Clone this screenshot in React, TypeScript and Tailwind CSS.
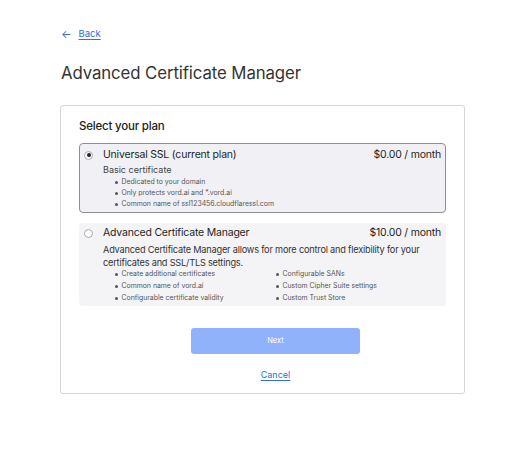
import React from "react";

const Bullet = ({ children, h }: { children: React.ReactNode; h: string }) => (
  <li className={`flex items-center gap-[4px] ${h}`}>
    <span className="w-[2.5px] h-[2.5px] rounded-full bg-[#555] shrink-0" />
    <span className="whitespace-nowrap">{children}</span>
  </li>
);

export default function App() {
  return (
    <div className="w-[520px] h-[456px] bg-white text-[#313131]" style={{ fontFamily: "Inter, 'Noto Sans', sans-serif" }}>
      <div className="pl-[61px] pt-[27px]">
        <div className="flex items-center gap-[7px] text-[#2f6fd6] text-[9.5px] h-[14px]">
          <span className="text-[11px] leading-none">←</span>
          <a className="underline underline-offset-2">Back</a>
        </div>
        <h1 className="mt-[21px] text-[16.8px] leading-[22px] tracking-[-0.1px] text-[#333]">Advanced Certificate Manager</h1>
      </div>
      <div className="ml-[60px] mt-[21px] w-[405px] h-[289px] border border-[#d6d6d6] rounded-[3px] px-[18px] pt-[12px]">
        <div className="text-[11.5px] font-medium tracking-[-0.2px] text-[#222] leading-[16px]">Select your plan</div>
        <div className="mt-[9px] rounded-[4px] border border-[#8e8e8e] bg-[#f1f1f5] pl-[4px] pr-[4px] pt-[4px] h-[70px]">
          <div className="flex items-center h-[14px] text-[10.5px] tracking-[-0.2px] text-[#1f1f1f]">
            <span className="w-[9px] h-[9px] rounded-full border border-[#aaa] bg-white flex items-center justify-center shrink-0">
              <span className="w-[4px] h-[4px] rounded-full bg-[#222]" />
            </span>
            <span className="ml-[10px]">Universal SSL (current plan)</span>
            <span className="ml-auto">$0.00 / month</span>
          </div>
          <div className="ml-[19px] mt-[1px] text-[9px] text-[#444] leading-[14px]">Basic certificate</div>
          <ul className="ml-[31px] text-[6.9px] text-[#555]">
            <Bullet h="h-[11px]">Dedicated to your domain</Bullet>
            <Bullet h="h-[11px]">Only protects vord.ai and *.vord.ai</Bullet>
            <Bullet h="h-[11px]">Common name of ssl123456.cloudflaressl.com</Bullet>
          </ul>
        </div>
        <div className="mt-[10px] rounded-[4px] bg-[#f4f4f7] pl-[5px] pr-[5px] pt-[3px] h-[83px]">
          <div className="flex items-center h-[14px] text-[10.5px] tracking-[-0.2px] text-[#1f1f1f]">
            <span className="w-[9px] h-[9px] rounded-full border border-[#aaa] bg-white shrink-0" />
            <span className="ml-[10px]">Advanced Certificate Manager</span>
            <span className="ml-auto">$10.00 / month</span>
          </div>
          <div className="ml-[19px] mt-[2.5px] text-[9.2px] tracking-[-0.2px] text-[#333] leading-[13px]">
            Advanced Certificate Manager allows for more control and flexibility for your certificates and SSL/TLS settings.
          </div>
          <div className="ml-[31px] grid grid-cols-[161px_1fr] text-[6.9px] text-[#555]">
            <ul>
              <Bullet h="h-[12px]">Create additional certificates</Bullet>
              <Bullet h="h-[12px]">Common name of vord.ai</Bullet>
              <Bullet h="h-[12px]">Configurable certificate validity</Bullet>
            </ul>
            <ul>
              <Bullet h="h-[12px]">Configurable SANs</Bullet>
              <Bullet h="h-[12px]">Custom Cipher Suite settings</Bullet>
              <Bullet h="h-[12px]">Custom Trust Store</Bullet>
            </ul>
          </div>
        </div>
        <div className="mt-[22px] pl-[26px] flex flex-col items-center">
          <button className="w-[169px] h-[26px] rounded-[3px] bg-[#8fb2fb] text-white text-[7.5px]">Next</button>
          <a className="mt-[15px] text-[9px] leading-[12px] text-[#2f6fd6] underline underline-offset-2">Cancel</a>
        </div>
      </div>
    </div>
  );
}
